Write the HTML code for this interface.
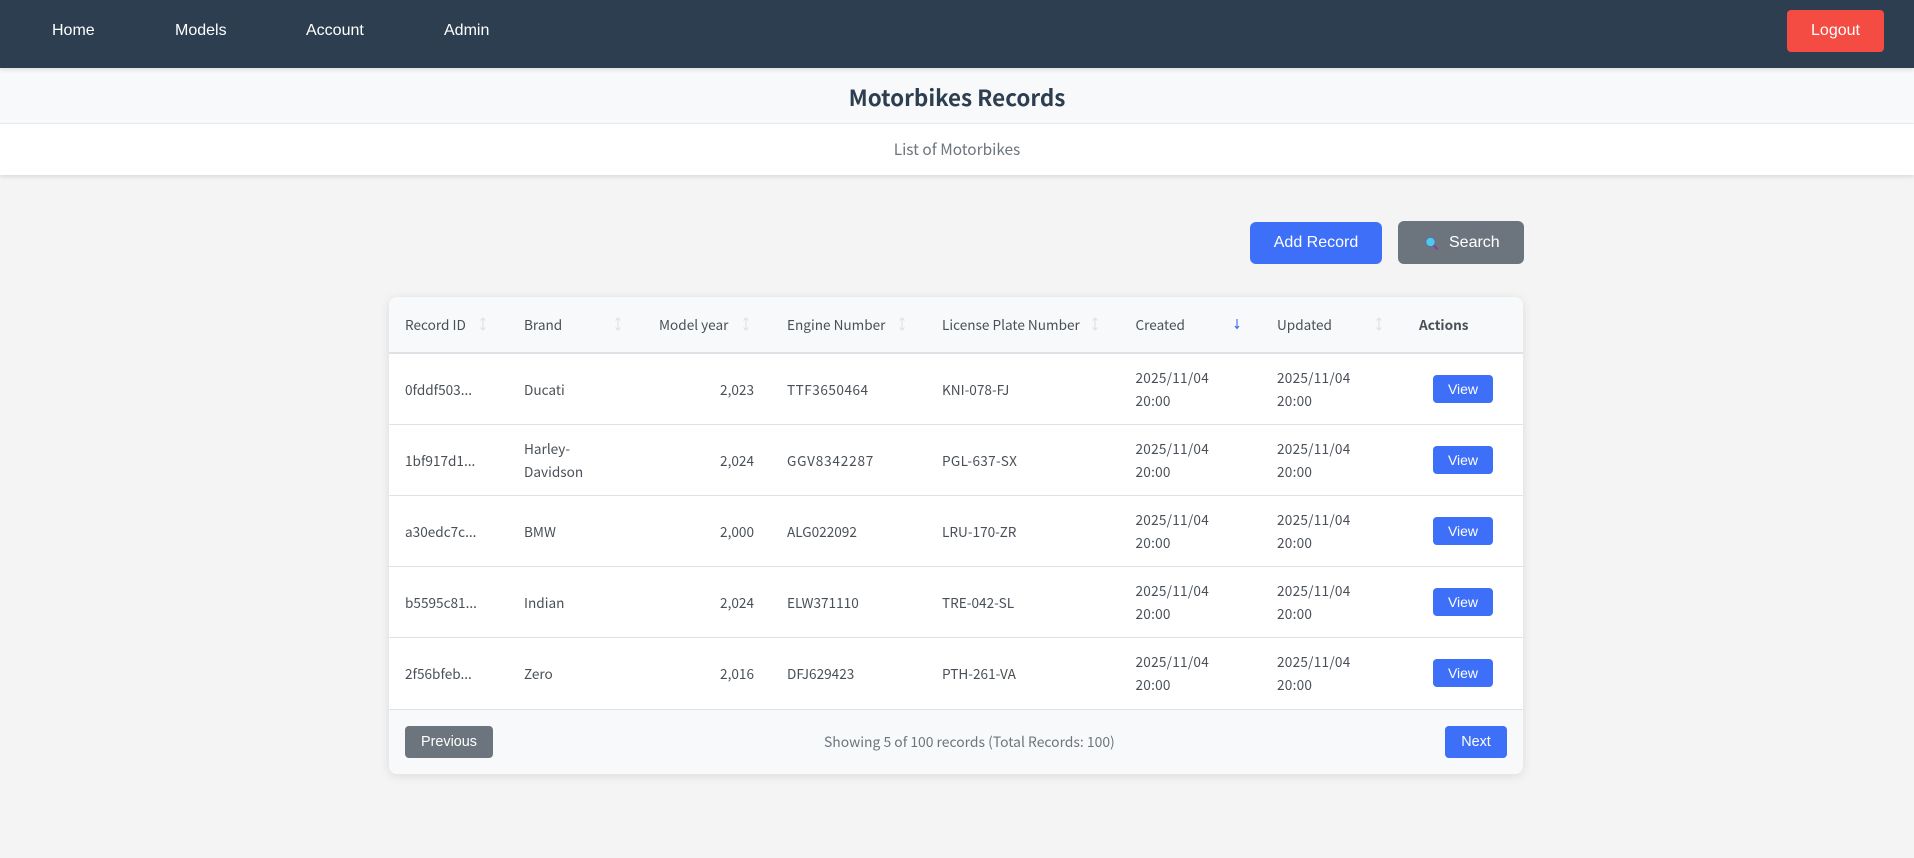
<!DOCTYPE html>
<html><head><meta charset="utf-8"><title>Motorbikes Records</title>
<style>
*{box-sizing:border-box}
html,body{margin:0;padding:0;width:1914px;height:858px;overflow:hidden;background:#f4f4f4}
body{font-family:"Noto Sans CJK JP","Liberation Sans",sans-serif;position:relative;color:#495057}
nav{position:absolute;left:0;top:0;width:1914px;height:68px;background:#2c3e50;box-shadow:0 2px 4px rgba(0,0,0,.1);z-index:3}
nav span{position:absolute;top:22px;font:16px/18px "Liberation Sans",Arial,sans-serif;color:#fff}
.btn{position:absolute;text-align:center;color:#fff;font-family:"Liberation Sans",Arial,sans-serif;border-radius:4px}
.band1{position:absolute;left:0;top:68px;width:1914px;height:56px;background:#f8f9fa;border-bottom:1px solid #e9ecef}
.band2{position:absolute;left:0;top:124px;width:1914px;height:51px;background:#fff;box-shadow:0 2px 4px rgba(0,0,0,.1)}
.title{position:absolute;left:0;width:1914px;top:81px;text-align:center;font-size:22.4px;line-height:32px;font-weight:700;color:#2c3e50}
.sub{position:absolute;left:0;width:1914px;top:138px;text-align:center;font-size:15.4px;line-height:22px;color:#6c757d}
.card{position:absolute;left:389px;top:297px;width:1134px;height:477px;background:#fff;border-radius:8px;box-shadow:0 2px 10px rgba(0,0,0,.1);overflow:hidden}
.head{position:absolute;left:0;top:0;width:1134px;height:57px;background:#f8f9fa;border-bottom:2px solid #dee2e6}
.foot{position:absolute;left:0;top:412px;width:1134px;height:65px;background:#f8f9fa;border-top:1px solid #dee2e6}
.line{position:absolute;left:0;width:1134px;height:1px;background:#dee2e6}
.t{position:absolute;white-space:nowrap;font-size:13.6px;line-height:23px;color:#495057}
.d{letter-spacing:.25px}
.r{text-align:right}
.view{position:absolute;left:1044px;width:60px;height:28px;background:#3d6ff8;border-radius:4px;color:#fff;font:14px/28px "Liberation Sans",Arial,sans-serif;text-align:center}
svg{position:absolute;overflow:visible}
</style></head><body>
<nav>
<span style="left:52px">Home</span><span style="left:175px">Models</span><span style="left:306px">Account</span><span style="left:444px">Admin</span>
<div class="btn" style="left:1787px;top:10px;width:97px;height:42px;background:#f44b43;font-size:16px;line-height:42px">Logout</div>
</nav>
<div class="band1"></div><div class="band2"></div>
<div class="title">Motorbikes Records</div>
<div class="sub">List of Motorbikes</div>
<div class="btn" style="left:1250px;top:222px;width:132px;height:42px;background:#3d6ff8;border-radius:6px;font-size:16px;line-height:42px">Add Record</div>
<div class="btn" style="left:1398px;top:221px;width:126px;height:43px;background:#6c757d;border-radius:6px;font-size:16px;line-height:43px;padding-left:51px;text-align:left">Search</div>
<svg style="left:1425px;top:236px" width="16" height="16" viewBox="0 0 16 16"><path d="M8.500 9L12.500 13.500" stroke="#8a3f8f" stroke-width="2.200" fill="none"/><circle cx="5.500" cy="6" r="4.600" fill="#4fc8f0" stroke="#4a70a8" stroke-width=".7"/></svg>

<div class="card">
<div class="head"></div>
<div class="t" style="left:16px;top:16px">Record ID</div>
<div class="t" style="left:135px;top:16px">Brand</div>
<div class="t" style="left:270px;top:16px">Model year</div>
<div class="t" style="left:398px;top:16px">Engine Number</div>
<div class="t" style="left:553px;top:16px">License Plate Number</div>
<div class="t" style="left:746.5px;top:16px">Created</div>
<div class="t" style="left:888px;top:16px">Updated</div>
<div class="t" style="left:1030px;top:16px;font-weight:700;color:#495057">Actions</div>
<svg style="left:90px;top:20px" width="8" height="14" viewBox="0 0 8 14"><path d="M4 1V13M1.500 3.500L4 1L6.500 3.500M1.500 10.500L4 13L6.500 10.500" stroke="#dfe3e7" stroke-width="1.200" fill="none"/></svg>
<svg style="left:225px;top:20px" width="8" height="14" viewBox="0 0 8 14"><path d="M4 1V13M1.500 3.500L4 1L6.500 3.500M1.500 10.500L4 13L6.500 10.500" stroke="#dfe3e7" stroke-width="1.200" fill="none"/></svg>
<svg style="left:353px;top:20px" width="8" height="14" viewBox="0 0 8 14"><path d="M4 1V13M1.500 3.500L4 1L6.500 3.500M1.500 10.500L4 13L6.500 10.500" stroke="#dfe3e7" stroke-width="1.200" fill="none"/></svg>
<svg style="left:509px;top:20px" width="8" height="14" viewBox="0 0 8 14"><path d="M4 1V13M1.500 3.500L4 1L6.500 3.500M1.500 10.500L4 13L6.500 10.500" stroke="#dfe3e7" stroke-width="1.200" fill="none"/></svg>
<svg style="left:702px;top:20px" width="8" height="14" viewBox="0 0 8 14"><path d="M4 1V13M1.500 3.500L4 1L6.500 3.500M1.500 10.500L4 13L6.500 10.500" stroke="#dfe3e7" stroke-width="1.200" fill="none"/></svg>
<svg style="left:986px;top:20px" width="8" height="14" viewBox="0 0 8 14"><path d="M4 1V13M1.500 3.500L4 1L6.500 3.500M1.500 10.500L4 13L6.500 10.500" stroke="#dfe3e7" stroke-width="1.200" fill="none"/></svg>
<svg style="left:844px;top:20px" width="8" height="14" viewBox="0 0 8 14"><path d="M4 2V11M2 9L4 11.500L6 9" stroke="#3d6ff8" stroke-width="1.100" fill="none"/></svg>

<div class="line" style="top:127px"></div>
<div class="line" style="top:198px"></div>
<div class="line" style="top:269px"></div>
<div class="line" style="top:340px"></div>

<div class="t" style="left:16px;top:81px">0fddf503...</div>
<div class="t" style="left:135px;top:81px">Ducati</div>
<div class="t r" style="left:270px;width:95px;top:81px">2,023</div>
<div class="t" style="left:398px;top:81px;letter-spacing:.5px">TTF3650464</div>
<div class="t" style="left:553px;top:81px">KNI-078-FJ</div>
<div class="t d" style="left:746.5px;top:69px">2025/11/04<br>20:00</div>
<div class="t d" style="left:888px;top:69px">2025/11/04<br>20:00</div>
<div class="view" style="top:78px">View</div>

<div class="t" style="left:16px;top:152px">1bf917d1...</div>
<div class="t" style="left:135px;top:140px">Harley-<br>Davidson</div>
<div class="t r" style="left:270px;width:95px;top:152px">2,024</div>
<div class="t" style="left:398px;top:152px;letter-spacing:.8px">GGV8342287</div>
<div class="t" style="left:553px;top:152px;letter-spacing:.3px">PGL-637-SX</div>
<div class="t d" style="left:746.5px;top:140px">2025/11/04<br>20:00</div>
<div class="t d" style="left:888px;top:140px">2025/11/04<br>20:00</div>
<div class="view" style="top:149px">View</div>

<div class="t" style="left:16px;top:223px">a30edc7c...</div>
<div class="t" style="left:135px;top:223px">BMW</div>
<div class="t r" style="left:270px;width:95px;top:223px">2,000</div>
<div class="t" style="left:398px;top:223px">ALG022092</div>
<div class="t" style="left:553px;top:223px">LRU-170-ZR</div>
<div class="t d" style="left:746.5px;top:211px">2025/11/04<br>20:00</div>
<div class="t d" style="left:888px;top:211px">2025/11/04<br>20:00</div>
<div class="view" style="top:220px">View</div>

<div class="t" style="left:16px;top:294px">b5595c81...</div>
<div class="t" style="left:135px;top:294px">Indian</div>
<div class="t r" style="left:270px;width:95px;top:294px">2,024</div>
<div class="t" style="left:398px;top:294px">ELW371110</div>
<div class="t" style="left:553px;top:294px">TRE-042-SL</div>
<div class="t d" style="left:746.5px;top:282px">2025/11/04<br>20:00</div>
<div class="t d" style="left:888px;top:282px">2025/11/04<br>20:00</div>
<div class="view" style="top:291px">View</div>

<div class="t" style="left:16px;top:365px">2f56bfeb...</div>
<div class="t" style="left:135px;top:365px">Zero</div>
<div class="t r" style="left:270px;width:95px;top:365px">2,016</div>
<div class="t" style="left:398px;top:365px">DFJ629423</div>
<div class="t" style="left:553px;top:365px">PTH-261-VA</div>
<div class="t d" style="left:746.5px;top:353px">2025/11/04<br>20:00</div>
<div class="t d" style="left:888px;top:353px">2025/11/04<br>20:00</div>
<div class="view" style="top:362px">View</div>

<div class="foot"></div>
<div class="btn" style="left:16px;top:429px;width:88px;height:32px;background:#6c757d;font-size:14.4px;line-height:33px">Previous</div>
<div class="t" style="left:435px;top:434px;font-size:13.9px;color:#6c757d">Showing 5 of 100 records (Total Records: 100)</div>
<div class="btn" style="left:1056px;top:429px;width:62px;height:32px;background:#3d6ff8;font-size:14.4px;line-height:33px">Next</div>
</div>
</body></html>
